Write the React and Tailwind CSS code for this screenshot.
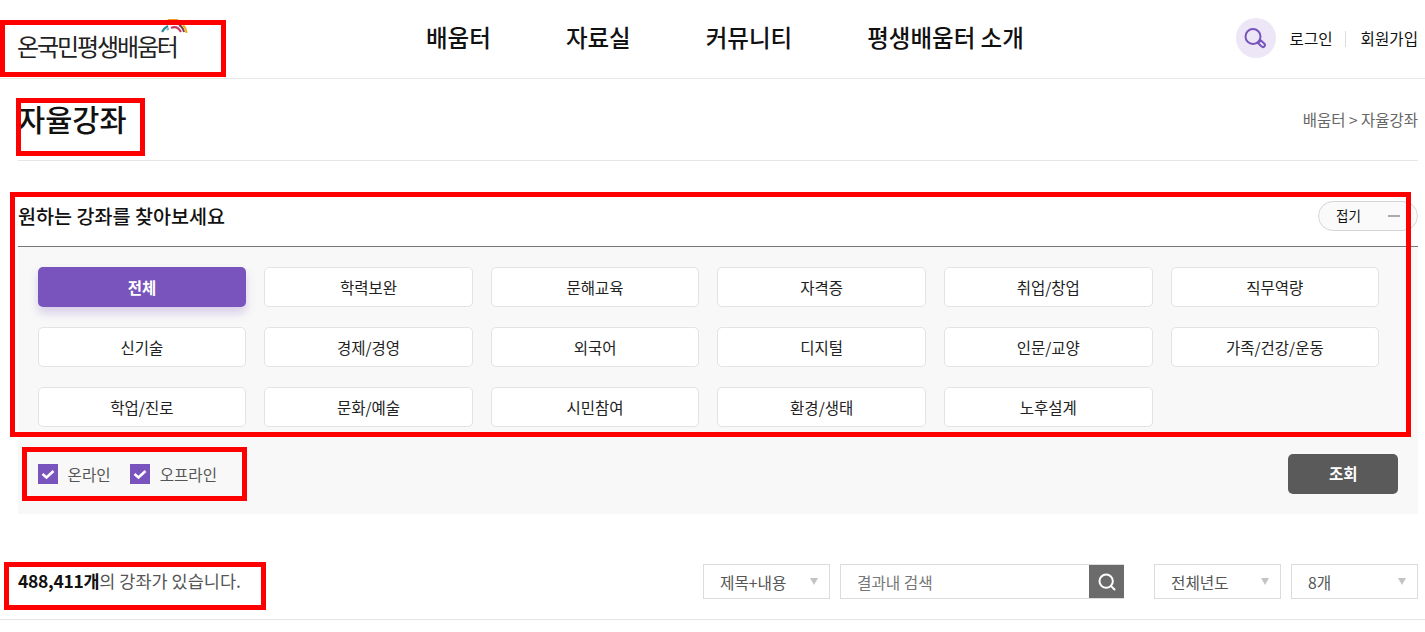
import { Search } from 'lucide-react';

const categories = [
    '전체', '학력보완', '문해교육', '자격증', '취업/창업', '직무역량',
    '신기술', '경제/경영', '외국어', '디지털', '인문/교양', '가족/건강/운동',
    '학업/진로', '문화/예술', '시민참여', '환경/생태', '노후설계',
];

const navItems = ['배움터', '자료실', '커뮤니티', '평생배움터 소개'];

function LogoArcs() {
    return (
        <svg className="absolute left-[161px] top-[19px]" width="27" height="16" viewBox="0 0 27 16" fill="none" strokeWidth="2">
            <path d="M1 13 Q3 9 7 7" stroke="#2a8a9c" />
            <path d="M6 11 Q7 10 8 9.5" stroke="#7fc0b0" />
            <path d="M10 9 Q16 6 20 13" stroke="#c43a62" />
            <path d="M7 1 Q12 -1 17 1" stroke="#f0a020" />
            <path d="M18 6 Q22 8 23 13" stroke="#8a3a50" />
            <path d="M22 6 Q25 9 25.5 14" stroke="#f2b01e" />
        </svg>
    );
}

function PurpleMagnifier() {
    return (
        <svg width="40" height="40" viewBox="0 0 40 40" fill="none" stroke="#7854bc" strokeWidth="2">
            <circle cx="17" cy="18.5" r="7.5" />
            <path d="M22 25 L25 22.5 L28.4 25.8 A1.8 1.8 0 0 1 25.6 28.4 Z" />
        </svg>
    );
}

function CheckMark() {
    return (
        <svg width="20" height="20" viewBox="0 0 20 20" fill="none" stroke="#fff" strokeWidth="2.6">
            <path d="M4.5 10 L8.5 13.5 L15.5 7" />
        </svg>
    );
}

function SelectBox({ label, width }) {
    return (
        <div className={`flex h-[35px] items-center justify-between border border-[#dcdcdc] bg-white pl-4 pr-[11px] text-[15.7px] text-[#555] ${width}`}>
            <span className="pt-[2px]">{label}</span>
            <span className="h-0 w-0 border-x-[4.5px] border-t-[7px] border-x-transparent border-t-[#c4c4c4]"></span>
        </div>
    );
}

function CheckItem({ label }) {
    return (
        <label className="flex items-center gap-[10px] text-[15.6px] text-[#555]">
            <span className="flex h-5 w-5 items-center justify-center bg-[#7854bc]">
                <CheckMark />
            </span>
            <span className="pt-[2px]">{label}</span>
        </label>
    );
}

export default function App() {
    return (
        <div className="relative h-[632px] overflow-hidden bg-white font-['Noto_Sans_CJK_KR','Noto_Sans',sans-serif] text-[#111]">
            {/* Header */}
            <header className="relative flex h-[79px] items-center border-b border-[#e8e8e8]">
                <div className="w-[426px] pl-[17px] pt-[14px] text-[24px] font-normal tracking-[-2.1px] text-[#222]">온국민평생배움터</div>
                <LogoArcs />
                <nav className="flex items-center gap-[75px] pb-[2px] text-[23.5px] font-medium">
                    {navItems.map((item) => (
                        <span key={item}>{item}</span>
                    ))}
                </nav>
                <div className="ml-auto flex items-center pr-[7px]">
                    <span className="mb-[2px] flex h-10 w-10 items-center justify-center rounded-full bg-[#ece6f7]">
                        <PurpleMagnifier />
                    </span>
                    <span className="ml-[14px] text-[15.6px]">로그인</span>
                    <span className="ml-[12px] mr-[15px] h-4 w-px bg-[#ddd]"></span>
                    <span className="text-[15.6px]">회원가입</span>
                </div>
            </header>

            {/* Title */}
            <div className="ml-[18px] mr-[7px] flex h-[82px] items-center justify-between border-b border-[#e5e5e5]">
                <h1 className="pb-[2px] text-[29.5px] font-medium leading-none">자율강좌</h1>
                <span className="text-[15.5px] text-[#666]">배움터 &gt; 자율강좌</span>
            </div>

            {/* Filter panel */}
            <section className="ml-[18px] mr-[7px] mt-[36px]">
                <div className="flex h-[50px] items-center justify-between border-b border-[#777] pb-[12px]">
                    <h2 className="text-[19.6px] font-medium leading-none">원하는 강좌를 찾아보세요</h2>
                    <button className="flex h-[30px] w-[100px] items-center justify-between rounded-full border border-[#d5d5d5] bg-[#fafafa] pl-[17px] pr-[17px] text-[13.5px]">
                        <span>접기</span>
                        <span className="h-[2px] w-3 bg-[#aaa]"></span>
                    </button>
                </div>
                <div className="bg-[#f8f8f8] pb-5 pl-[19.6px] pr-[38.8px] pt-5">
                    <div className="grid grid-cols-[repeat(6,208.6px)] gap-x-[18px] gap-y-5">
                        {categories.map((name, idx) => (
                            <button
                                key={name}
                                className={
                                    idx === 0
                                        ? 'h-10 rounded-[5px] bg-[#7854bc] pt-[2px] text-[15.5px] font-bold text-white shadow-[0_6px_10px_rgba(120,84,188,0.25)]'
                                        : 'h-10 rounded-[5px] border border-[#e3e3e3] bg-white pt-[2px] text-[15.5px] text-[#222]'
                                }
                            >
                                {name}
                            </button>
                        ))}
                    </div>
                    <div className="mt-[27px] flex h-10 items-center justify-between">
                        <div className="flex items-center gap-[19px]">
                            <CheckItem label="온라인" />
                            <CheckItem label="오프라인" />
                        </div>
                        <button className="h-10 w-[110px] -mr-[19px] rounded-[5px] bg-[#5a5a5a] text-[15.5px] font-bold text-white">조회</button>
                    </div>
                </div>
            </section>

            {/* Result bar */}
            <div className="ml-[18px] mr-[7px] mt-[50px] flex h-[35px] items-center">
                <p className="text-[17.5px] text-[#555]">
                    <b className="font-bold tracking-[-0.3px] text-[#111]">488,411개</b>의 강좌가 있습니다.
                </p>
                <div className="ml-auto flex items-center">
                    <SelectBox label="제목+내용" width="w-[127px]" />
                    <div className="ml-[10px] flex h-[35px] w-[284px] border border-r-0 border-[#dcdcdc]">
                        <span className="flex flex-1 items-center pl-4 pt-[2px] text-[15.7px] text-[#777]">결과내 검색</span>
                        <span className="flex w-[35px] items-center justify-center bg-[#6b6b6b] text-white">
                            <Search size={20} strokeWidth={2.4} />
                        </span>
                    </div>
                    <div className="ml-[30px]"><SelectBox label="전체년도" width="w-[127px]" /></div>
                    <div className="ml-[10px]"><SelectBox label="8개" width="w-[127px]" /></div>
                </div>
            </div>
            <div className="mt-[20px] h-px bg-[#e5e5e5]"></div>

            {/* Red annotation boxes over the page */}
            <div className="pointer-events-none absolute left-0 top-[20px] h-[57px] w-[226px] border-[5px] border-[#ff0000]"></div>
            <div className="pointer-events-none absolute left-[16px] top-[98px] h-[58px] w-[129px] border-[5px] border-[#ff0000]"></div>
            <div className="pointer-events-none absolute left-[10px] top-[192px] h-[245px] w-[1401px] border-[5px] border-[#ff0000]"></div>
            <div className="pointer-events-none absolute left-[22px] top-[447px] h-[54px] w-[225px] border-[5px] border-[#ff0000]"></div>
            <div className="pointer-events-none absolute left-[4px] top-[562px] h-[48px] w-[262px] border-[5px] border-[#ff0000]"></div>
        </div>
    );
}
